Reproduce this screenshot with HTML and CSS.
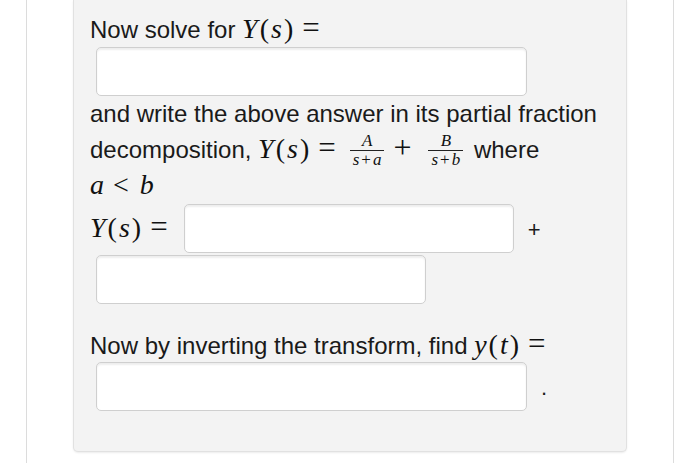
FILE: index.html
```html
<!DOCTYPE html>
<html>
<head>
<meta charset="utf-8">
<link rel="stylesheet" href="styles.css">
</head>
<body>
<div class="page">
  <div class="panel">
    <p class="line first">Now solve for <span class="m"><i>Y</i><span class="paren">(</span><i>s</i><span class="paren">)</span><span class="rel">=</span></span></p>
    <div class="row"><input class="ans wide" type="text"></div>
    <p class="para">and write the above answer in its partial fraction<br>decomposition, <span class="m"><i>Y</i><span class="paren">(</span><i>s</i><span class="paren">)</span><span class="rel">=</span><span class="frac"><span class="num"><i>A</i></span><span class="den"><i>s</i><span class="op">+</span><i>a</i></span></span><span class="bin">+</span><span class="frac"><span class="num"><i>B</i></span><span class="den"><i>s</i><span class="op">+</span><i>b</i></span></span></span> <span class="where">where</span><br><span class="m"><i>a</i><span class="rel lt">&lt;</span><i>b</i></span></p>
    <div class="row">
      <span class="m label"><i>Y</i><span class="paren">(</span><i>s</i><span class="paren">)</span><span class="rel">=</span></span>
      <input class="ans mid" type="text">
      <span class="after">+</span>
    </div>
    <div class="row second"><input class="ans mid" type="text"></div>
    <p class="line spaced">Now by inverting the transform, find <span class="m"><i>y</i><span class="paren">(</span><i>t</i><span class="paren">)</span><span class="rel">=</span></span></p>
    <div class="row last"><input class="ans wide" type="text"><span class="after dot">.</span></div>
  </div>
</div>
</body>
</html>
```

FILE: styles.css
```css
html, body {
  margin: 0;
  padding: 0;
  background: #ffffff;
}

body {
  font-family: "Liberation Sans", Arial, sans-serif;
  font-size: 24px;
  color: #1a1a1a;
}

.page {
  margin: 0 26px;
  height: 463px;
  border-left: 1px solid #dcdcdc;
  border-right: 1px solid #dcdcdc;
  padding: 0 46px;
  box-sizing: border-box;
  overflow: hidden;
}

.panel {
  background: #f3f3f3;
  border: 1px solid #e1e1e1;
  border-top: none;
  border-radius: 0 0 5px 5px;
  box-shadow: 0 1px 2px rgba(0, 0, 0, 0.08);
  height: 452px;
  box-sizing: border-box;
  padding: 13px 16px 0;
}

.line, .para {
  margin: 0;
  line-height: 36px;
  white-space: nowrap;
}

.first {
  line-height: 34px;
}

.spaced {
  margin-top: 24px;
}

.row {
  display: flex;
  align-items: baseline;
}

.second {
  margin-top: 2px;
}

.last {
  margin-top: -2px;
}

.ans {
  display: block;
  margin: 0 0 0 6px;
  height: 49px;
  box-sizing: border-box;
  border: 1px solid #cfcfcf;
  border-radius: 5px;
  background: #ffffff;
  box-shadow: inset 0 2px 2px rgba(0, 0, 0, 0.07);
  font-family: "Liberation Sans", Arial, sans-serif;
  font-size: 24px;
  padding: 0 8px;
  outline: none;
}

.wide {
  width: 431px;
}

.mid {
  width: 330px;
}

.row .label + .ans {
  margin-left: 10px;
}

.after {
  margin-left: 14px;
  font-size: 22px;
}

.dot {
  margin-left: 14px;
}

.m {
  font-family: "Liberation Serif", "Times New Roman", serif;
  font-size: 28px;
  line-height: 28px;
  color: #111;
}

.m i {
  font-style: italic;
}

.m i + .paren {
  margin-left: 2px;
}

.paren + i {
  margin-left: 2px;
}

.rel {
  font-size: 31px;
  margin: 0 6px 0 9px;
}

.lt {
  font-size: 28px;
  margin: 0 11px 0 9px;
}

.bin {
  font-size: 32px;
  margin: 0 9px 0 9px;
}

.frac {
  display: inline-flex;
  flex-direction: column;
  align-items: stretch;
  vertical-align: 12px;
  font-size: 17px;
  margin: 0 0 0 8px;
}

.num {
  line-height: 14px;
  padding: 0 3px 2px;
  border-bottom: 1px solid #222;
  text-align: center;
}

.den {
  line-height: 15px;
  padding: 1px 3px 0;
  text-align: center;
}

.op {
  margin: 0 2px;
  font-style: normal;
}

.where {
  margin-left: 4px;
}
```
